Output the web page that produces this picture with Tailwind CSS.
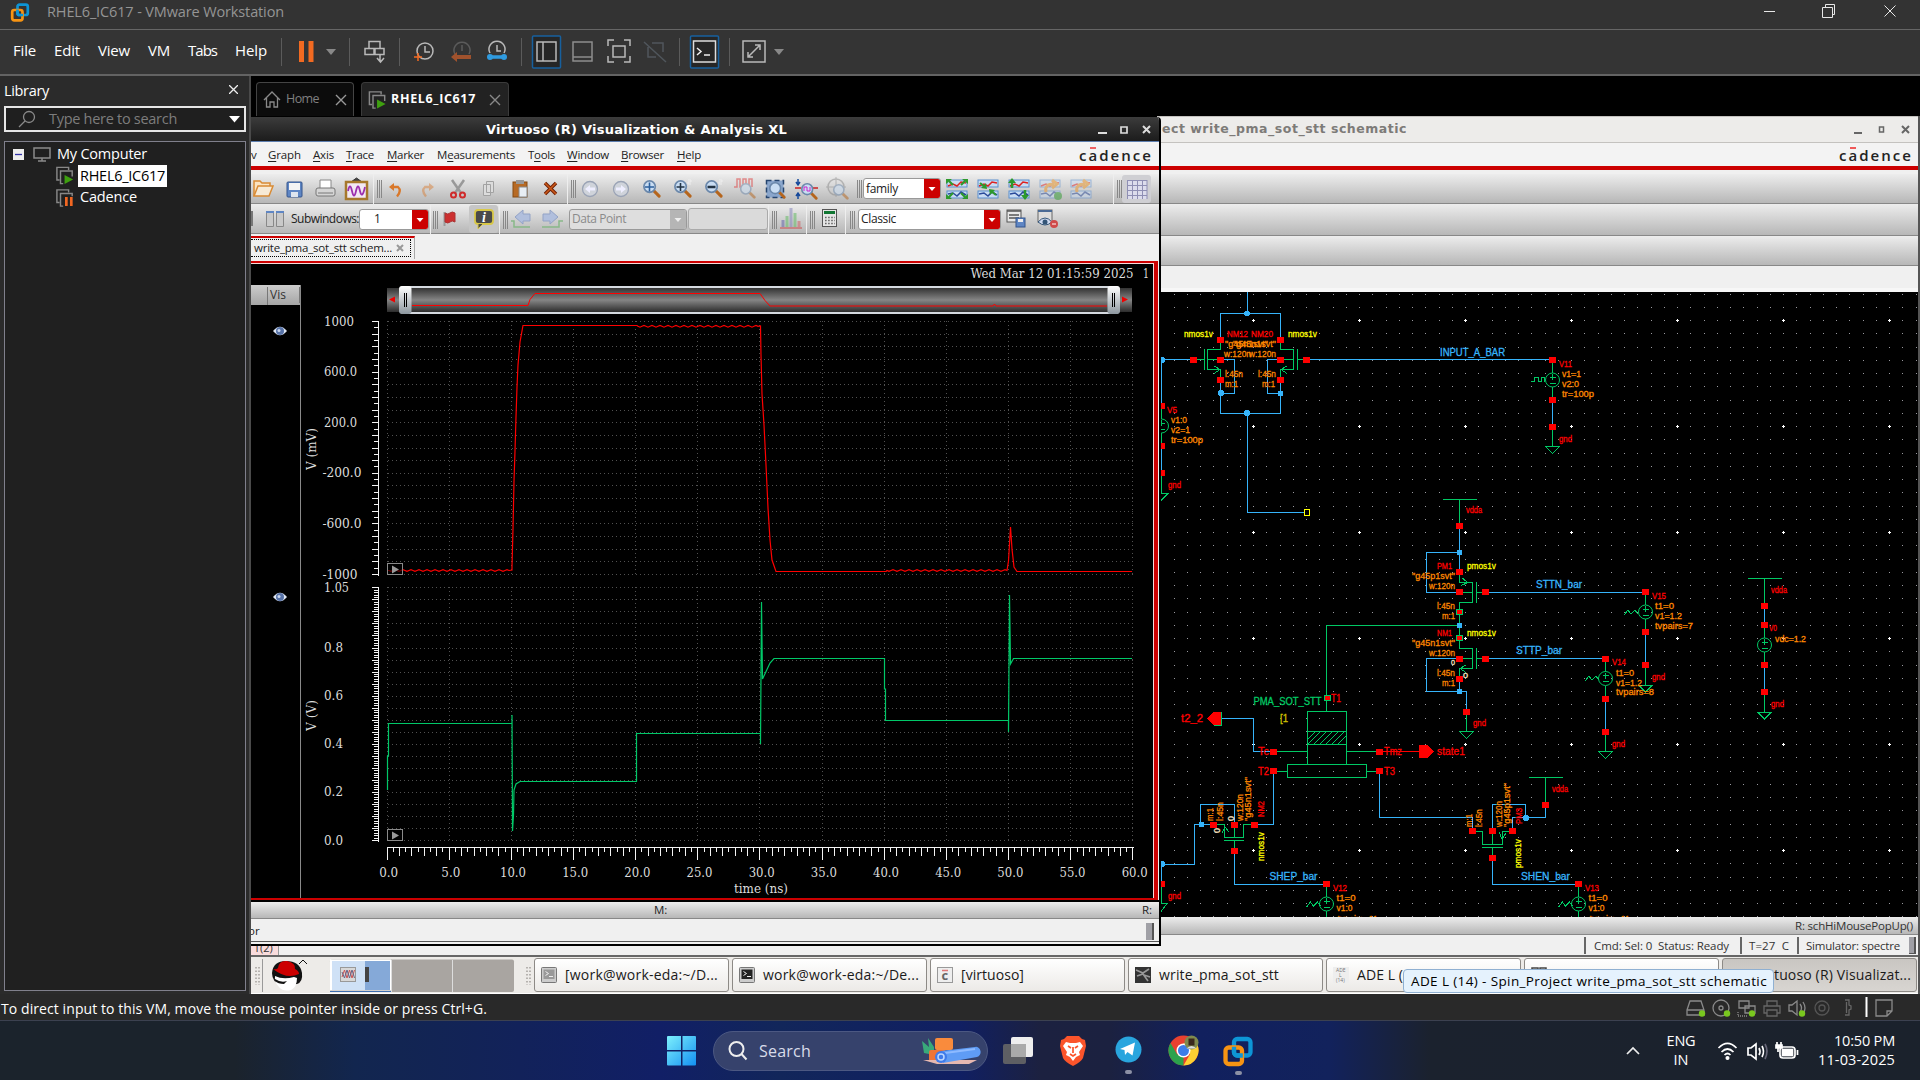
<!DOCTYPE html>
<html lang="en">
<head>
<meta charset="utf-8">
<title>RHEL6_IC617 - VMware Workstation</title>
<script src="https://cdn.jsdelivr.net/npm/@tailwindcss/browser@4"></script>
</head>
<body class="w-[1920px] h-[1080px] overflow-hidden bg-[#2b2b2b] font-['Open_Sans','Noto_Sans',sans-serif] text-[15px] text-white leading-none">
<svg class="hidden">
  <defs>
    <symbol id="vmw" viewBox="0 0 20 20"><rect x="7.5" y="2.2" width="10.3" height="10.3" rx="2" fill="none" stroke="#0d95d6" stroke-width="2.7"/><rect x="2.2" y="7.5" width="10.3" height="10.3" rx="2" fill="none" stroke="#f79413" stroke-width="2.7"/><path d="M7.5 7v3.5a2 2 0 0 0 2 2h3.5" fill="none" stroke="#0d95d6" stroke-width="2.7"/></symbol>
    <symbol id="vmon" viewBox="0 0 20 20"><path d="M4 15H1V1h13v3" fill="none" stroke="#888" stroke-width="1.6"/><path d="M8 19H5V5h13v6" fill="none" stroke="#888" stroke-width="1.6"/><path d="M9.500 9.500L19 14.500 9.500 19.500z" fill="#3fa010"/></symbol>
    <symbol id="vmpause" viewBox="0 0 20 20"><path d="M4 15H1V1h13v3" fill="none" stroke="#888" stroke-width="1.6"/><path d="M8 19H5V5h13v3" fill="none" stroke="#888" stroke-width="1.6"/><path d="M11.500 9v10M17 9v10" stroke="#f26722" stroke-width="3"/></symbol>
    <symbol id="lens" viewBox="0 0 20 20"><path d="M12 12l6 6" stroke="#b5651d" stroke-width="3.200" stroke-linecap="round"/><circle cx="8" cy="8" r="6" fill="#c9ddf3" stroke="#6b88ab" stroke-width="1.800"/></symbol>
    <symbol id="eye" viewBox="0 0 14 10"><path d="M0 5Q7-3.500 14 5 7 13.500 0 5z" fill="#dfe6f2"/><circle cx="7" cy="5" r="4" fill="#5873a8"/><circle cx="6" cy="4.500" r="1.500" fill="#c9d6ee"/></symbol>
    <symbol id="term" viewBox="0 0 16 16"><rect x=".5" y=".5" width="15" height="15" rx="1" fill="#ccc" stroke="#777"/><rect x="2.500" y="2.500" width="11" height="9.500" fill="currentColor"/><path d="M4.500 4.500l3 2-3 2M8 9.500h4" stroke="#eee" fill="none"/></symbol>
    <symbol id="wave" viewBox="0 0 22 20"><rect x="1" y="1" width="20" height="7" fill="#c9dcf2" stroke="#5b8fd0"/><rect x="1" y="12" width="20" height="7" fill="#c9dcf2" stroke="#5b8fd0"/><path d="M2 7l5-2 4 2 4-4 5 1" stroke="#d22" stroke-width="1.500" fill="none"/><path d="M2 15l5-1 4 3 4-4 5 3" stroke="#2a4a9a" stroke-width="1.500" fill="none"/></symbol>
  </defs>
</svg>

<div class="flex flex-col w-[1920px] h-[1080px]">
  <!-- host window title -->
  <header class="flex h-[30px] items-center bg-[#333] border-b border-[#666] text-[#959595]">
    <svg class="w-5 h-[21px] ml-2.5 mt-[-5px]"><use href="#vmw"/></svg>
    <span data-w="237" class="ml-[17px] mt-[-5px] text-[14.5px] whitespace-nowrap">RHEL6_IC617 - VMware Workstation</span>
    <div class="ml-auto flex items-center mr-6 mt-[-8px]">
      <svg width="11" height="12" class="mr-[47px]"><path d="M0 6.500h11" stroke="#e8e8e8"/></svg>
      <svg width="14" height="14" class="mr-[48px]"><path d="M.5 3.500h10v10h-10zM3.500 3V.5h9v10H11" fill="none" stroke="#e8e8e8"/></svg>
      <svg width="12" height="12"><path d="M.5.5l11 11M11.500.5l-11 11" stroke="#e8e8e8"/></svg>
    </div>
  </header>
  <!-- host menu -->
  <nav class="relative flex h-[46px] items-center bg-[#343434] border-b-2 border-[#636363] pl-[13px] pb-[2px] whitespace-nowrap">
    <div class="flex text-[15px] pb-[2px]">
      <span class="w-[41px]"><span data-w="23">File</span></span><span class="w-[44px]"><span data-w="26">Edit</span></span><span class="w-[50px]"><span data-w="32">View</span></span><span class="w-[40px]"><span data-w="22">VM</span></span><span class="w-[47px]"><span data-w="29">Tabs</span></span><span class="w-[45px]"><span data-w="32">Help</span></span>
    </div>
    <svg width="520" height="42" viewBox="280 30 520 42" fill="none" stroke="#b9b9b9" stroke-width="1.500">
      <path d="M281.500 38v28M349.500 38v28M399.500 38v28M521.500 38v28M679.500 38v28M729.500 38v28" stroke="#5b5b5b" stroke-width="1"/>
      <path d="M301.500 41v21M311 41v21" stroke="#f26a21" stroke-width="5"/><path d="M326 49h10l-5 6z" fill="#888" stroke="none"/>
      <path d="M369 41.500h11v7h-11zM365 48.500h9v6h-9zM375 48.500h9v6h-9zM380 54v7M377 58l3.500 4 3.500-4"/>
      <g><circle cx="425" cy="51" r="8"/><path d="M425 46v6h5"/><path d="M414 57h8M418 53v8" stroke="#f26a21"/></g>
      <g><path d="M455 54a8 8 0 1 1 14 0" stroke="#5b5b5b"/><path d="M462 45v6" stroke="#5b5b5b"/><path d="M471 57h-14" stroke="#a0522d" stroke-width="4"/><path d="M451 57l6-5v10z" fill="#a0522d" stroke="none"/></g>
      <g><path d="M490 53a8 8 0 1 1 14 0"/><path d="M497 45v6h4"/><path d="M489 57h15" stroke="#2f9be0" stroke-width="3.500"/><circle cx="490" cy="57" r="3" fill="#2f9be0" stroke="none"/><circle cx="504" cy="57" r="3" fill="#2f9be0" stroke="none"/></g>
      <rect x="532.500" y="36" width="28" height="32" rx="1" fill="#262626" stroke="#17609e"/><rect x="537" y="42" width="19" height="19"/><path d="M543 42v19"/>
      <rect x="573" y="42" width="19" height="19" stroke="#8d8d8d"/><path d="M573 57h19" stroke="#8d8d8d"/>
      <path d="M608 46v-6h6M624 40h6v6M630 56v6h-6M614 62h-6v-6"/><rect x="613" y="46" width="12" height="11"/>
      <path d="M644 42l22 20M648 47v10h8M652 43h11v9" stroke="#50565c"/>
      <rect x="690.500" y="36" width="28" height="32" rx="1" fill="#262626" stroke="#17609e"/><rect x="693.500" y="41" width="22" height="21" stroke="#ddd"/><path d="M697 48l4 3.500-4 3.500M704 55h6" stroke="#eee"/>
      <rect x="743" y="41" width="22" height="21"/><path d="M748 57l12-12M755 45h5v5M748 52v5h5"/><path d="M774 49h10l-5 6z" fill="#888" stroke="none"/>
    </svg>
  </nav>

  <div class="flex h-[918px]">
    <!-- library -->
    <aside class="w-[251px] bg-[#2b2b2b] border-r-2 border-[#4a4a4a] pl-1 pr-1">
      <div class="flex justify-between items-center h-[29px] pt-px"><span data-w="45" class="text-[14.500px]">Library</span><svg width="9" height="9" class="mr-[7px] mb-1"><path d="M0 0l9 9M9 0L0 9" stroke="#eee" stroke-width="1.300"/></svg></div>
      <div class="flex items-center h-[26px] border-2 border-[#e6e6e6] bg-[#1f1f1f] w-[242px] pl-3 pr-1 mt-px text-[#7d7d7d]">
        <svg width="18" height="18" fill="none" stroke="#8a8a8a" stroke-width="1.300"><circle cx="11" cy="7" r="5.500"/><path d="M7 11l-6 6"/></svg>
        <span data-w="128" class="ml-[13px] text-[14.500px] whitespace-nowrap">Type here to search</span>
        <svg width="11" height="7" class="ml-auto"><path d="M0 0h11L5.500 6.500z" fill="#fff"/></svg>
      </div>
      <div class="mt-[9px] h-[850px] w-[242px] border border-[#80808c] bg-[#202020] pl-2 pt-px text-[14.500px] whitespace-nowrap">
        <div class="flex items-center h-[22px]"><svg width="11" height="11"><path d="M0 0h11v11H0z" fill="#eee"/><path d="M2 5.500h7" stroke="#33a" stroke-width="1.300"/></svg><svg width="18" height="15" class="ml-[9px]" fill="none" stroke="#8a8a8a" stroke-width="1.500"><path d="M1 1h16v10H1zM9 11v3M5 14h8"/></svg><span data-w="90" class="ml-1.5">My Computer</span></div>
        <div class="flex items-center h-[21px] pl-[43px]"><svg width="18" height="19"><use href="#vmon"/></svg><span class="ml-[4px] bg-white text-black h-[22px] w-[89px] pl-[2px] leading-[22px]"><span data-w="85">RHEL6_IC617</span></span></div>
        <div class="flex items-center h-[23px] pl-[43px]"><svg width="18" height="18"><use href="#vmpause"/></svg><span data-w="57" class="ml-1.5">Cadence</span></div>
      </div>
    </aside>

    <main class="relative w-[1669px] bg-black overflow-hidden flex flex-col">
      <div class="flex h-10 pt-[6px] pl-[5px] gap-[7px] text-[12.500px] text-[#808080]">
        <div class="flex items-center w-[98px] border border-b-0 border-[#444] rounded-t bg-[#0c0c0c] pl-[6px]"><svg width="18" height="17" fill="none" stroke="#8a8a8a" stroke-width="1.300"><path d="M1 9l8-8 8 8M3.500 7v9H7v-5h4v5h3.500V7"/></svg><span data-w="33" class="ml-[5px]">Home</span><svg width="12" height="12" class="ml-[16px]"><path d="M1 1l10 10M11 1L1 11" stroke="#999" stroke-width="1.400"/></svg></div>
        <div class="flex items-center w-[148px] border border-b-0 border-[#3b3b3b] rounded-t bg-[#222] pl-[6px]"><svg width="19" height="18"><use href="#vmon"/></svg><span data-w="85" class="ml-1 font-bold text-white whitespace-nowrap">RHEL6_IC617</span><svg width="12" height="12" class="ml-[13px]"><path d="M1 1l10 10M11 1L1 11" stroke="#888" stroke-width="1.400"/></svg></div>
      </div>

      <!-- schematic editor window -->
      <section class="absolute left-[906px] top-10 w-[761px] h-[841px] bg-[#f0f0f0] text-[#333] overflow-hidden">
        <div class="flex items-center h-[27px] bg-[#edecea] border-t border-b border-[#c4c2bf] pl-[5px] text-[#7d7b78]">
          <span data-w="245" class="text-[12.500px] font-bold whitespace-nowrap font-['DejaVu_Sans',sans-serif]">ect write_pma_sot_stt schematic</span>
          <svg width="60" height="12" class="ml-auto mr-[6px] text-[#666]" stroke="currentColor" fill="none" stroke-width="2"><path d="M2 9h8"/><path d="M27.500 3h4v5h-4z" stroke-width="1.500"/><path d="M50 2l7 7M57 2l-7 7"/></svg>
        </div>
        <div class="flex h-[23px] items-center justify-end pr-[6px] bg-[#f3f3f3] border-b border-[#f3f3f3]"><svg width="73" height="20"><text x="0" y="17" textLength="72" lengthAdjust="spacing" font-family="Open Sans" font-weight="600" font-size="15" fill="#222">cadence</text><path d="M11 4h6" stroke="#e33" stroke-width="1.600"/></svg></div>
        <div class="h-1 bg-[#c00]"></div>
        <div class="mt-[4px] h-[30px] bg-linear-to-b from-[#ededed] to-[#b7b7b7] border-b border-[#888]"></div>
        <div class="h-8 bg-linear-to-b from-[#ededed] to-[#b7b7b7] border-b border-[#888]"></div>
        <div class="h-[30px] bg-linear-to-b from-[#ededed] to-[#b7b7b7] border-b border-[#888]"></div>
        <div class="h-[26px] border-b-4 border-[#f7f7f7]"></div>
        <svg id="sch" class="ml-[4px] block" width="757" height="625" viewBox="1161 292 757 625" fill="none" shape-rendering="crispEdges"></svg>
        <div class="flex items-center justify-end h-[18px] pr-[5px] bg-linear-to-b from-[#ededed] to-[#b7b7b7] border-b border-[#888] text-[11.500px]"><span data-w="118" class="whitespace-nowrap">R: schHiMousePopUp()</span></div>
        <div class="flex items-center justify-end h-[22px] text-[11.500px] border-b-2 border-[#666] whitespace-pre pr-[2px]">
          <span class="border-l-2 border-[#666] h-[17px] pl-2 pr-[11px] leading-[17px]"><span data-w="135">Cmd: Sel: 0  Status: Ready</span></span><span class="border-l-2 border-[#666] h-[17px] pl-[7px] pr-[8px] leading-[17px]"><span data-w="40">T=27  C</span></span><span class="border-l-2 border-[#666] h-[17px] pl-[7px] leading-[17px]"><span data-w="94">Simulator: spectre</span></span><span class="ml-[9px] w-[7px] h-[17px] bg-[#a0a0a6] border-r-2 border-b border-[#555]"></span>
        </div>
      </section>

      <!-- waveform window -->
      <section class="absolute left-0 top-[41px] w-[910px] h-[829px] bg-[#f0f0f0] border-r-2 border-b-2 border-black text-[#222] overflow-hidden rounded-tr">
        <div class="flex items-center h-[25px] bg-linear-to-b from-[#3c3c3c] to-[#1c1c1c] border-b border-[#5e7fb0] pl-[235px]">
          <span data-w="301" class="text-[13px] font-bold text-white whitespace-nowrap font-['DejaVu_Sans',sans-serif]">Virtuoso (R) Visualization &amp; Analysis XL</span>
          <svg width="56" height="12" class="ml-auto mr-[6px] mt-[2px]" stroke="#ddd" fill="none" stroke-width="2"><path d="M1 9h9"/><path d="M24 3h6v6h-6z" stroke-width="1.700"/><path d="M46 2l7 7M53 2l-7 7"/></svg>
        </div>
        <div class="relative flex items-center h-[24px] pt-[2px] bg-[#f3f3f3] text-[11.500px] whitespace-nowrap">
          <span class="w-[17px]"><span data-w="5">v</span></span>
          <span class="w-[45px]"><span data-w="33"><u class="underline-offset-2">G</u>raph</span></span><span class="w-[33px]"><span data-w="21"><u class="underline-offset-2">A</u>xis</span></span><span class="w-[41px]"><span data-w="28"><u class="underline-offset-2">T</u>race</span></span><span class="w-[50px]"><span data-w="37"><u class="underline-offset-2">M</u>arker</span></span><span class="w-[91px]"><span data-w="78">M<u class="underline-offset-2">e</u>asurements</span></span><span class="w-[39px]"><span data-w="27">T<u class="underline-offset-2">o</u>ols</span></span><span class="w-[54px]"><span data-w="42"><u class="underline-offset-2">W</u>indow</span></span><span class="w-[56px]"><span data-w="43"><u class="underline-offset-2">B</u>rowser</span></span><span data-w="24"><u class="underline-offset-2">H</u>elp</span>
          <svg width="73" height="20" class="ml-auto mr-[7px]"><text x="0" y="16" textLength="72" lengthAdjust="spacing" font-family="Open Sans" font-weight="600" font-size="15" fill="#222">cadence</text><path d="M11 3h6" stroke="#e33" stroke-width="1.600"/></svg>
        </div>
        <div class="h-1 bg-[#c00]"></div>
        <!-- toolbar row 1 -->
        <div class="mt-[4px] flex h-[30px] items-center bg-linear-to-b from-[#ededed] to-[#b7b7b7] border-b border-[#888] *:shrink-0">
          <svg width="28" height="26" viewBox="0 0 28 26"><path d="M3 20V5h6l2 2h8v4" fill="#fbe3c0" stroke="#d98b35" stroke-width="1.500"/><path d="M3 20l4-10h15l-4 10z" fill="#f7ead6" stroke="#d98b35" stroke-width="1.500"/></svg>
          <svg width="31" height="26" viewBox="0 0 31 26"><rect x="8" y="6" width="15" height="15" rx="1" fill="#5f86c4" stroke="#34548c"/><rect x="10" y="7" width="11" height="7" fill="#f4f4f4"/><rect x="12" y="16" width="7" height="5" fill="#dfe5ee"/></svg>
          <svg width="31" height="26" viewBox="0 0 31 26"><path d="M10 12V4h11v8" fill="#fff" stroke="#888"/><rect x="6" y="12" width="19" height="8" rx="2" fill="#d5d5d5" stroke="#777"/><path d="M8 17h15" stroke="#777"/></svg>
          <svg width="31" height="26" viewBox="0 0 31 26"><path d="M10 6l5.500-4L21 6" fill="#444" stroke="#333"/><rect x="5" y="6" width="21" height="17" fill="#f2e8f4" stroke="#a6782c" stroke-width="2.500"/><path d="M7 15q2-9 4 0t4 0 4 0 5-4" stroke="#9b2fae" stroke-width="1.800" fill="none"/></svg>
          <svg width="10" height="30"><path d="M1.500 0v30" stroke="#eee"/><path d="M5.500 6v18M7.500 6v18M9.500 6v18" stroke="#888"/></svg>
          <svg width="30" height="26" viewBox="0 0 30 26"><path d="M15 20.500q5-6 1-9.500h-5" stroke="#d9782a" stroke-width="2.300" fill="none"/><path d="M12 7l-5 4 5 4z" fill="#d9782a"/></svg>
          <svg width="31" height="26" viewBox="0 0 31 26" opacity=".45"><path d="M14 20.500q-5-6-1-9.500h5" stroke="#d9782a" stroke-width="2.300" fill="none"/><path d="M17 7l5 4-5 4z" fill="#d9782a"/></svg>
          <svg width="31" height="26" viewBox="0 0 31 26"><path d="M9 4l9 13M21 4l-9 13" stroke="#999" stroke-width="2.500"/><circle cx="10.500" cy="19" r="2.500" fill="none" stroke="#cf2a2a" stroke-width="2"/><circle cx="19.500" cy="19" r="2.500" fill="none" stroke="#cf2a2a" stroke-width="2"/></svg>
          <svg width="31" height="26" viewBox="0 0 31 26" fill="#dcdcdc" stroke="#a2a2a2"><path d="M12.500 5.500h7v11h-7zM9.500 8.500h7v11h-7z"/></svg>
          <svg width="31" height="26" viewBox="0 0 31 26"><rect x="8" y="6" width="14" height="15" fill="#b76a24" stroke="#854a12"/><rect x="11" y="4" width="8" height="4" fill="#999"/><path d="M14 11h8l0 10h-8z" fill="#e8eef4" stroke="#888"/></svg>
          <svg width="31" height="26" viewBox="0 0 31 26"><path d="M9 7l11 11M20 7L9 18" stroke="#702006" stroke-width="3.500"/><path d="M9 7l11 11M20 7L9 18" stroke="#cc5a1a" stroke-width="1.500"/></svg>
          <svg width="9" height="30"><path d="M.5 0v30" stroke="#eee"/><path d="M4.500 6v18M6.500 6v18M8.500 6v18" stroke="#888"/></svg>
          <svg width="30" height="26" viewBox="0 0 30 26"><circle cx="14" cy="13" r="7.500" fill="#cfd3da" stroke="#9aa3b5" stroke-width="1.300"/><path d="M9 13l5-4v2.500h5v3h-5V17z" fill="#eef"/></svg>
          <svg width="31" height="26" viewBox="0 0 31 26"><circle cx="15" cy="13" r="7.500" fill="#cfd3da" stroke="#9aa3b5" stroke-width="1.300"/><path d="M20 13l-5-4v2.500h-5v3h5V17z" fill="#eef"/></svg>
          <svg width="31" height="26" viewBox="0 0 31 26"><use href="#lens" x="5" y="3" width="19" height="19"/><path d="M12.500 6.500v9M8 11h9" stroke="#2b5f9c" stroke-width="1.600"/></svg>
          <svg width="31" height="26" viewBox="0 0 31 26"><use href="#lens" x="5" y="3" width="19" height="19"/><path d="M12.500 7v8M8.500 11h8" stroke="#234" stroke-width="1.600"/><path d="M20 4h3v2h-3v2h3" stroke="#eee" fill="none"/></svg>
          <svg width="31" height="26" viewBox="0 0 31 26"><use href="#lens" x="5" y="3" width="19" height="19"/><path d="M8.500 11h8" stroke="#234" stroke-width="2.400"/><path d="M20 4h3v2h-3v2h3" stroke="#eee" fill="none"/></svg>
          <svg width="31" height="26" viewBox="0 0 31 26" opacity=".5"><path d="M4 11h3V3h3v8h3V3h3v8h3V3h3v8" stroke="#d33" fill="none" stroke-width="1.500"/><use href="#lens" x="9" y="6" width="17" height="17"/></svg>
          <svg width="31" height="26" viewBox="0 0 31 26"><rect x="5.500" y="4.500" width="17" height="17" fill="#8aa6cc" stroke="#26456f" stroke-dasharray="5 3" stroke-width="1.500"/><use href="#lens" x="7" y="5" width="18" height="18"/></svg>
          <svg width="31" height="26" viewBox="0 0 31 26"><path d="M6 3v5M4 6l2 3 2-3M6 23v-5M4 20l2-3 2 3" stroke="#15489a" stroke-width="1.500" fill="none"/><path d="M3 12h6M19 12h7" stroke="#c22" stroke-width="1.500"/><use href="#lens" x="8" y="6" width="18" height="18"/><path d="M12 15v-4h3v4h3v-4" stroke="#c2c" fill="none"/></svg>
          <svg width="31" height="26" viewBox="0 0 31 26" opacity=".5"><circle cx="13" cy="11" r="8" fill="none" stroke="#888" stroke-width="1.500"/><path d="M13 1v20M3 11h20" stroke="#888"/><use href="#lens" x="9" y="7" width="17" height="17"/></svg>
          <svg width="9" height="30"><path d="M-.5 0v30" stroke="#eee"/><path d="M3.500 6v18M5.500 6v18M7.500 6v18" stroke="#888"/></svg>
          <div class="flex items-center w-[78px] h-[21px] bg-white border border-[#999] rounded-[3px] overflow-hidden text-[12px]"><span data-w="32" class="ml-[2px]">family</span><svg width="16" height="21" class="ml-auto bg-[#c00]"><path d="M4.500 9h7L8 13z" fill="#fff"/></svg></div>
          <svg width="31" height="26" viewBox="0 0 31 26"><use href="#wave" x="5" y="3" width="22" height="20"/><path d="M8 5l4 4M24 5l-4 4M8 21l4-4M24 21l-4-4" stroke="#2d9a2d" stroke-width="2.200"/><path d="M5 3h6l-6 5zM27 3h-6l6 5zM5 23h6l-6-5zM27 23h-6l6-5z" fill="#2d9a2d"/></svg>
          <svg width="31" height="26" viewBox="0 0 31 26"><use href="#wave" x="5" y="3" width="22" height="20"/><path d="M8 7l5 4M24 19l-5-4" stroke="#2d9a2d" stroke-width="2.200"/><path d="M15 13l-6-1 5-5zM17 13l6 1-5 5z" fill="#2d9a2d"/></svg>
          <svg width="31" height="26" viewBox="0 0 31 26"><use href="#wave" x="5" y="3" width="22" height="20"/><path d="M9 12V6M22 14v7" stroke="#2d9a2d" stroke-width="2.500"/><path d="M5 7l4-5 4 5zM18 19l4 5 4-5z" fill="#2d9a2d"/></svg>
          <svg width="31" height="26" viewBox="0 0 31 26" opacity=".5"><use href="#wave" x="5" y="3" width="22" height="20"/><path d="M12 16q-2-8 8-8M18 4l5 4-5 4" stroke="#e89020" stroke-width="3" fill="none"/><circle cx="24" cy="20" r="4" fill="#2d9a2d"/></svg>
          <svg width="31" height="26" viewBox="0 0 31 26" opacity=".5"><use href="#wave" x="5" y="3" width="22" height="20"/><path d="M12 16q-2-8 8-8M18 4l5 4-5 4" stroke="#e89020" stroke-width="3" fill="none"/></svg>
          <svg width="26" height="30"><path d="M17.500 0v30" stroke="#eee"/><path d="M21.500 6v18M23.500 6v18M25.500 6v18" stroke="#888"/></svg>
          <svg width="29" height="28"><rect width="29" height="28" rx="3" fill="#cfcfd3"/><rect x="5" y="5" width="20" height="19" fill="#dcdcec"/><path d="M5.500 5v19M10.500 5v19M15.500 5v19M20.500 5v19M25 5v19M5 5.500h20M5 10.500h20M5 15.500h20M5 20.500h20" stroke="#8f8fb4"/></svg>
        </div>
        <!-- toolbar row 2 -->
        <div class="flex h-[30px] items-center pt-px bg-linear-to-b from-[#ededed] to-[#b7b7b7] border-b border-[#888] *:shrink-0 text-[12px] whitespace-nowrap">
          <svg width="34" height="26"><rect x="0" y="5" width="2" height="15" fill="#777"/><path d="M15.500 5.500h7v15h-7zM25.500 5.500h7v15h-7z" fill="#c9c9c9" stroke="#888"/><path d="M15 6h8M25 6h8" stroke="#5f86c4" stroke-width="2"/></svg>
          <span data-w="68" class="ml-[6px]">Subwindows:</span>
          <div class="flex items-center w-[70px] h-[21px] bg-white border border-[#999] rounded-[3px] overflow-hidden"><span class="ml-[14px]">1</span><svg width="16" height="21" class="ml-auto bg-[#c00]"><path d="M4.500 9h7L8 13z" fill="#fff"/></svg></div>
          <svg width="10" height="29"><path d="M1.500 0v30" stroke="#eee"/><path d="M4.500 6v18M6.500 6v18M8.500 6v18" stroke="#888"/></svg>
          <svg width="25" height="26"><path d="M5.500 6v14" stroke="#999" stroke-width="2"/><path d="M6 7q3 2 5 0t5 0v9q-3-2-5 0t-5 0z" fill="#cc2f2f" stroke="#a33"/></svg>
          <svg width="29" height="28" class="ml-[5px]"><rect width="29" height="28" rx="3" fill="#c6c6c6"/><rect x="6" y="5" width="18" height="14" rx="3" fill="#4a4a4a" stroke="#d8c848" stroke-width="1.800"/><path d="M9 19v5l5-5" fill="#4a4a4a" stroke="#d8c848"/><text x="13" y="17" font-family="Liberation Serif" font-style="italic" font-weight="bold" font-size="14" fill="#fff">i</text></svg>
          <svg width="12" height="29"><path d="M1.500 0v30" stroke="#eee"/><path d="M5.500 6v18M7.500 6v18M9.500 6v18" stroke="#888"/></svg>
          <svg width="26" height="26"><path d="M5 11l8-7v4h7v7h-7v3z" fill="#b1bfdd" stroke="#93a3c6"/><path d="M1 15h3v6h16" stroke="#88b888" stroke-width="1.500" fill="none"/></svg>
          <svg width="31" height="26"><path d="M22 11l-8-7v4H7v7h7v3z" fill="#b1bfdd" stroke="#93a3c6"/><path d="M27 15h-4v6H6" stroke="#88b888" stroke-width="1.500" fill="none"/></svg>
          <div class="flex items-center w-[118px] h-[21px] ml-[2px] border border-[#999] bg-[#dedede] rounded-[3px] overflow-hidden text-[#8b8b8b]"><span data-w="54" class="ml-[2px]">Data Point</span><svg width="16" height="21" class="ml-auto bg-[#b5b5b5]"><path d="M4.500 9h7L8 13z" fill="#eee"/></svg></div>
          <div class="w-[80px] h-[22px] ml-px border border-[#aaa] bg-[#dadada] rounded-[3px]"></div>
          <svg width="9" height="29"><path d="M.5 0v30" stroke="#eee"/><path d="M4.500 6v18M6.500 6v18M8.500 6v18" stroke="#888"/></svg>
          <svg width="28" height="26" opacity=".55"><path d="M6 21v-7" stroke="#66a" stroke-width="3"/><path d="M10 21v-11M18 21V7" stroke="#6b6" stroke-width="3"/><path d="M14 21V2" stroke="#88b" stroke-width="3"/><path d="M22 21v-6" stroke="#c66" stroke-width="3"/><path d="M3 22h22" stroke="#c55" stroke-width="2"/></svg>
          <svg width="11" height="29"><path d="M1.500 0v30" stroke="#eee"/><path d="M5.500 6v18M7.500 6v18M9.500 6v18" stroke="#888"/></svg>
          <svg width="27" height="26"><rect x="6.500" y="3.500" width="14" height="17" fill="#e6e6e6" stroke="#555"/><rect x="8" y="5" width="11" height="3" fill="#173"/><path d="M9 11.500h10M9 14.500h10M9 17.500h10" stroke="#666" stroke-width="1.600" stroke-dasharray="1.600 1.500"/></svg>
          <svg width="15" height="29"><path d="M2.500 0v30" stroke="#eee"/><path d="M7.500 6v18M9.500 6v18M11.500 6v18" stroke="#888"/></svg>
          <div class="flex items-center w-[143px] h-[21px] bg-white border border-[#999] rounded-[3px] overflow-hidden"><span data-w="35" class="ml-[2px]">Classic</span><svg width="16" height="21" class="ml-auto bg-[#c00]"><path d="M4.500 9h7L8 13z" fill="#fff"/></svg></div>
          <svg width="31" height="26"><rect x="6" y="4" width="14" height="12" fill="#e8e8e8" stroke="#555"/><path d="M6 5h14M8 9h10M8 12h10" stroke="#555" stroke-width="1.500"/><rect x="15" y="12" width="9" height="9" fill="#5f86c4" stroke="#34548c"/><rect x="17" y="13" width="5" height="3" fill="#eee"/></svg>
          <svg width="31" height="26"><rect x="6" y="4" width="14" height="12" fill="#ddd" stroke="#666"/><path d="M6 5h14" stroke="#4a6a95" stroke-width="2"/><path d="M6 16q7-8 14 0-7 6-14 0z" fill="#cfdaf0" stroke="#357"/><circle cx="13" cy="16" r="2.500" fill="#357"/><circle cx="22" cy="18" r="4" fill="#cf4a4a"/><path d="M20 18h4" stroke="#fff"/></svg>
        </div>
        <!-- document tab -->
        <div class="flex h-[25px] mt-[2px]">
          <div class="w-[164px] border-t-2 border-[#c00] border-r border-r-[#aaa] h-[23px]"><div class="flex items-center h-[18px] w-[160px] border border-l-0 border-dotted border-black text-[11.500px] pl-[3px] mt-px"><span data-w="138" class="whitespace-nowrap">write_pma_sot_stt schem...</span><svg width="8" height="8" class="ml-[4px]"><path d="M1 1l6 6M7 1L1 7" stroke="#999" stroke-width="2"/></svg></div></div>
        </div>
        <!-- plot -->
        <div class="bg-black border-t-2 border-r-4 border-b-2 border-[#c00] w-[907px] h-[639px]">
          <svg id="plot" class="block border-t border-r border-[#f6dada]" width="903" height="635" viewBox="251 264 902 634" fill="none"></svg>
        </div>
        <div class="flex items-center h-[19px] bg-linear-to-b from-[#ededed] to-[#b7b7b7] border-t-2 border-t-black border-b border-b-[#888] text-[11.500px]"><span class="pl-[403px]">M:</span><span class="ml-auto mr-[7px]">R:</span></div>
        <div class="flex items-center h-[23px] pt-[2px] text-[11.500px] border-b border-[#555] overflow-hidden"><span class="-ml-[3px]">or</span><span class="ml-auto mr-[5px] w-2 h-[17px] bg-[#a0a0a6] border-r-2 border-[#555]"></span></div>
      </section>

      <!-- strip under the windows and the GNOME panel -->
      <div class="absolute left-0 top-[870px] w-[910px] h-[11px] bg-[#f0f0f0] border-b-2 border-[#666] overflow-hidden"><div class="w-7 h-[10px] bg-[#f9dcdc] border-r border-[#999] text-[#333] text-[11px] leading-[4px] pl-[3px]">T(2)</div></div>
      <footer class="absolute left-0 top-[881px] w-[1667px] h-[37px] bg-[#edebe8] flex items-center text-[#1a1a1a] text-[14px] whitespace-nowrap border-b border-[#fff]">
        <svg width="283" height="36" viewBox="251 957 283 36">
          <path d="M256 967v18M259 967v18M527 967v18M530 967v18" stroke="#b5b2ae" stroke-width="2" stroke-dasharray="1.500 2"/><path d="M262.500 959v33" stroke="#999"/>
          <path d="M272 973q1-12 14-12 14 0 16 12 1 9-5 11l-16 1q-9-3-9-12z" fill="#111"/><path d="M275 976q8 4 19 1l3 1q0 9-6 12-8 2-12-3-5-5-4-11z" fill="#fff"/><path d="M275 979q6 4 12 2l-3 3q-6 0-9-3z" fill="#111"/><path d="M273 969q3 1 5-1 1-8 9-7 9 2 8 8 4 2 4 5-12 6-26-5z" fill="#c00"/><path d="M299 964l4-4 4 4" stroke="#111" fill="none"/>
          <rect x="330" y="959.500" width="184" height="32.500" rx="2" fill="#a9a5a1"/><rect x="330" y="959.500" width="61" height="31" fill="#fff"/><rect x="332" y="961" width="33" height="29" fill="#cfe1f6"/><rect x="365" y="961" width="25" height="29" fill="#85a9d8"/><path d="M330 991.500h61" stroke="#3d6dae"/><path d="M391.500 960v32M452.500 960v32" stroke="#ddd"/><rect x="340.500" y="967.500" width="15" height="14" fill="#d8d8d8" stroke="#999"/><path d="M342 977l2.500-7 2.500 8 2.500-8 2.500 8 2.500-8" stroke="#c55" fill="none"/><path d="M342 972l2.500 6 2.500-8 2.500 8 2.500-8 2.500 8" stroke="#668" fill="none"/><rect x="365" y="967" width="4" height="15" fill="#444"/>
        </svg>
        <div class="flex gap-[3px] items-center">
          <div class="flex items-center w-[195px] h-[34px] border border-[#8d8a86] rounded-[3px] bg-linear-to-b from-white to-[#eceae7] pl-[6px]"><svg class="w-4 h-4 text-[#999]"><use href="#term"/></svg><span data-w="153" class="ml-2">[work@work-eda:~/D...</span></div>
          <div class="flex items-center w-[195px] h-[34px] border border-[#8d8a86] rounded-[3px] bg-linear-to-b from-white to-[#eceae7] pl-[6px]"><svg class="w-4 h-4 text-[#222]"><use href="#term"/></svg><span data-w="156" class="ml-2">work@work-eda:~/De...</span></div>
          <div class="flex items-center w-[195px] h-[34px] border border-[#8d8a86] rounded-[3px] bg-linear-to-b from-white to-[#eceae7] pl-[6px]"><svg width="16" height="16"><rect x=".5" y=".5" width="15" height="15" fill="#eee" stroke="#999"/><text x="4.500" y="13" font-family="Open Sans" font-weight="bold" font-size="13" fill="#666">c</text><path d="M5 3.500h6" stroke="#d77" stroke-width="1.500"/></svg><span data-w="63" class="ml-2">[virtuoso]</span></div>
          <div class="flex items-center w-[195px] h-[34px] border border-[#8d8a86] rounded-[3px] bg-linear-to-b from-white to-[#eceae7] pl-[6px]"><svg width="16" height="16"><rect width="16" height="16" fill="#333"/><path d="M1 3l7 3 6-4M2 9l6-2 5 7M9 8l6 2" stroke="#999" stroke-width="1.600" fill="none"/></svg><span data-w="120" class="ml-2">write_pma_sot_stt</span></div>
          <div class="flex items-center w-[195px] h-[34px] border border-[#8d8a86] rounded-[3px] bg-linear-to-b from-white to-[#eceae7] pl-[6px]"><svg width="16" height="16"><rect width="16" height="16" fill="#eee"/><g font-family="Open Sans" font-size="5" fill="#777"><text x="3" y="5">ADE</text><text x="6" y="10">L</text><text x="3" y="15">(14)</text></g></svg><span data-w="46" class="ml-2">ADE L (</span></div>
          <div class="flex items-start w-[195px] h-[34px] border border-[#8d8a86] rounded-[3px] bg-linear-to-b from-white to-[#eceae7] pl-[6px] pt-[8px]"><svg width="16" height="16"><path d="M1 1h6v6H1zM9 1h6v6H9z" fill="#fff" stroke="#444" stroke-width="1.500"/></svg></div>
          <div class="flex items-center justify-end w-[195px] h-[34px] border border-[#8d8a86] rounded-[3px] bg-linear-to-b from-[#c9c6c2] to-[#d8d5d1] pr-[5px]"><span data-w="137">tuoso (R) Visualizat...</span></div>
        </div>
      </footer>
      <div class="absolute left-[1152px] top-[893px] w-[371px] h-[24px] rounded-[4px] border border-[#8fb0d2] bg-[#e5f2fd] text-black text-[13.500px] pl-[7px] leading-[22px] whitespace-nowrap"><span data-w="356">ADE L (14) - Spin_Project write_pma_sot_stt schematic</span></div>
      <div class="absolute right-0 top-10 w-[2px] h-[878px] bg-[#555]"></div>
    </main>
  </div>

  <!-- host status line -->
  <div class="flex items-center h-[27px] bg-[#292929] border-b border-[#3c4150] pl-px text-[14px] whitespace-nowrap">
    <span data-w="486" class="mt-[3px]">To direct input to this VM, move the mouse pointer inside or press Ctrl+G.</span>
    <svg width="216" height="26" viewBox="1685 995 216 26" class="ml-auto mr-[19px]" fill="none" stroke="#8a8a8a" stroke-width="1.300">
      <g transform="translate(0 1)">
      <path d="M1687 1010l3-9h11l3 9v5h-17zM1687 1010h17"/><circle cx="1721" cy="1008" r="8"/><circle cx="1721" cy="1008" r="2"/><path d="M1739 1001h10v7h-10zM1745 1006h10v7h-10z"/><path d="M1738 1012v4h9" stroke-dasharray="1 1"/>
      <path d="M1767 1006v-5h10v5M1767 1013h-3v-7h16v7h-3M1767 1010h10v6h-10z" stroke="#666"/><path d="M1789 1005h3l5-4v14l-5-4h-3zM1800 1004q3 4 0 8M1803 1002q4 6 0 12"/><circle cx="1822" cy="1008" r="7" stroke="#555"/><circle cx="1822" cy="1008" r="3" stroke="#555"/><path d="M1845 1000h4v5l2 1v3l-2 1v5h-4M1846.500 1002v11" stroke="#666"/><path d="M1866.500 997v20" stroke="#fff" stroke-width="2"/><path d="M1876 1000h16v11l-5 5h-11zM1892 1011h-5v5"/>
      <g fill="#7ac71f" stroke="none"><circle cx="1702" cy="1013.500" r="3.200"/><circle cx="1727" cy="1013.500" r="3.200"/><circle cx="1752" cy="1013.500" r="3.200"/><circle cx="1802" cy="1013.500" r="3.200"/></g>
      </g>
    </svg>
  </div>

  <!-- Windows taskbar -->
  <div class="flex items-center h-[59px] bg-[linear-gradient(90deg,#1b232c_0,#1b232c_235px,#12264f_355px,#12225a_520px,#111f66_660px,#12265a_780px,#101f63_960px,#1c2140_1040px,#1b2140_1110px,#11205e_1200px,#12225c_1330px,#1b222e_1430px,#1b222c_1920px)]">
    <svg width="30" height="30" class="ml-[667px]"><defs><linearGradient id="win" x1="0" y1="0" x2="1" y2="1"><stop offset="0" stop-color="#7df0fc"/><stop offset="1" stop-color="#1390f2"/></linearGradient></defs><path d="M0 1a1 1 0 0 1 1-1h13v14H0zM15.500 0H28a1 1 0 0 1 1 1v13H15.500zM0 15.500h14v14H1a1 1 0 0 1-1-1zM15.500 15.500H29v13a1 1 0 0 1-1 1H15.500z" fill="url(#win)"/></svg>
    <div class="flex items-center w-[275px] h-10 ml-4 rounded-full bg-[#36426c] border border-[#4c5882] pl-[14px] pr-[6px]">
      <svg width="20" height="20" fill="none" stroke="#eee" stroke-width="2"><circle cx="8.500" cy="8" r="7"/><path d="M13.500 13l5 5.500"/></svg>
      <span data-w="52" class="ml-[11px] text-[16px] text-[#d8dcea]">Search</span>
      <svg width="60" height="28" class="ml-auto"><path d="M3 16L1 4l7 6-1-9 6 9v8z" fill="#39a97a"/><rect x="14" y="1" width="18" height="12" rx="2" fill="#f98b3c"/><rect x="8" y="13" width="17" height="12" rx="2" fill="#ef7535"/><path d="M2 23h54l-8 4H16z" fill="#e6b8b0"/><path d="M20 14l34-4a4.500 5 0 0 1 2 10l-34 6z" fill="#5f9cf5"/><path d="M24 16l30-4" stroke="#8dbaff" stroke-width="2"/><circle cx="20" cy="20" r="6" fill="#3f7bea"/><circle cx="20" cy="20" r="3" fill="none" stroke="#bcd7ff" stroke-width="1.500"/></svg>
    </div>
    <svg width="30" height="30" class="ml-[15px]"><rect x="8" y="1" width="22" height="20" rx="2" fill="#eee"/><rect x="0" y="8" width="23" height="20" rx="2" fill="#666" fill-opacity=".9"/><path d="M8 8h15v13H8z" fill="#aaa"/></svg>
    <svg width="28" height="30" class="ml-[26px]"><path d="M8 0h12l3 3 3 1 1 6-3 12q-2 4-10 8Q6 26 4 22L1 10 2 4l3-1z" fill="#fb542b"/><path d="M7 6l4 1h6l4-1 3 4-4 6 1 3-4 2-3 4-3-4-4-2 1-3-4-6z" fill="#fff"/><path d="M9 10l3 2M19 10l-3 2M14 11v6M11 18l3 2 3-2" stroke="#fb542b" stroke-width="1.700" fill="none"/></svg>
    <div class="flex flex-col items-center ml-7 pt-[9px]"><svg width="27" height="27"><circle cx="13.500" cy="13.500" r="13" fill="#29a5de"/><path d="M5 13l15-6.500-2.500 13-5-3.500-2.500 3-.5-5z" fill="#fff"/></svg><i class="w-[7px] h-1 rounded bg-[#8c90a5] mt-[7px]"></i></div>
    <svg width="31" height="31" viewBox="-15.500 -15.500 31 31" class="ml-[26px]"><circle r="15" fill="#e8412f"/><path d="M-13-7.500L-6.500 3.800 0 6.500 0 15A15 15 0 0 1-13-7.500z" fill="#2ba24c"/><path d="M0 15A15 15 0 0 0 13-7.500H0L6.500 3.800z" fill="#fdd032"/><circle r="7" fill="#fff"/><circle r="5.500" fill="#3c7de8"/><circle cx="8" cy="-8" r="7" fill="#7f8a4e"/><path d="M5-12h6v7H5z" fill="#3a281c"/><path d="M3-2q5-5 10 0z" fill="#ddd"/></svg>
    <div class="flex flex-col items-center ml-[23px] pt-[9px]"><svg width="32" height="33"><use href="#vmw"/></svg><i class="w-[7px] h-1 rounded bg-[#8c90a5] mt-[3px]"></i></div>
    <svg width="14" height="9" class="ml-auto" fill="none" stroke="#eee" stroke-width="1.700"><path d="M1 8l6-6 6 6"/></svg>
    <div class="flex flex-col items-center gap-[5px] ml-[26px] text-[14.500px] w-[30px]"><span data-w="29">ENG</span><span data-w="15">IN</span></div>
    <svg width="82" height="24" class="ml-[21px]" fill="none" stroke="#fff" stroke-width="1.700"><path d="M1.500 9q9-9 18 0M4.500 13q6-6 12 0M7.500 16q3-3 6 0"/><circle cx="10.500" cy="19" r="1.200" fill="#fff"/><path d="M31 9h3l5-4v15l-5-4h-3zM42 9q2 3.500 0 7M45 7q3 5.500 0 11"/><path d="M48 5q4 7 0 15" stroke="#667"/><rect x="63" y="8" width="15" height="11" rx="3"/><rect x="65.500" y="10.500" width="10" height="6" fill="#fff"/><path d="M80.500 11v5"/><path d="M61 13V7M59 6h6v3h-6zM60 3v3M64 3v3" fill="#fff"/></svg>
    <div class="flex flex-col items-end gap-[5px] ml-[14px] mr-[25px] w-[82px] text-[14.500px]"><span data-w="61">10:50 PM</span><span data-w="77">11-03-2025</span></div>
  </div>
</div>

<script>
// Give each measured label its exact advance width by spreading the letters.
function fitLabels() {
  document.querySelectorAll('[data-w]').forEach(e => {
    const w = +e.dataset.w, n = e.textContent.length;
    Object.assign(e.style, { display: 'inline-block', whiteSpace: 'pre', flex: 'none', width: 'max-content', letterSpacing: '0px' });
    const d = (w - e.getBoundingClientRect().width) / n;
    e.style.letterSpacing = d.toFixed(3) + 'px';
    e.style.width = w + 'px';
  });
}
fitLabels();
addEventListener('load', () => { fitLabels(); requestAnimationFrame(fitLabels); });
document.fonts.ready.then(fitLabels);

// ---- waveform plot ----
(() => {
  const F = 'font-family="DejaVu Serif Condensed, DejaVu Serif, serif" fill="#dcdcdc" font-size="13"';
  const t = (x, y, s, w, extra = '') => `<text x="${x}" y="${y}" ${F} textLength="${w}" lengthAdjust="spacingAndGlyphs" ${extra}>${s}</text>`;
  const X = v => 387.5 + v * 12.433;
  let o = `<defs><linearGradient id="g1" x1="0" y1="0" x2="0" y2="1"><stop offset="0" stop-color="#333"/><stop offset=".5" stop-color="#858585"/><stop offset="1" stop-color="#2c2c2c"/></linearGradient><linearGradient id="g2" x1="0" y1="0" x2="0" y2="1"><stop offset="0" stop-color="#fff"/><stop offset="1" stop-color="#8d979f"/></linearGradient><linearGradient id="g3" x1="0" y1="0" x2="0" y2="1"><stop offset="0" stop-color="#ccc"/><stop offset="1" stop-color="#a5a5a5"/></linearGradient></defs>`;
  o += `<rect x="251" y="285" width="50" height="20" fill="url(#g3)"/><path d="M267.500 287v18M299.500 287v16" stroke="#777"/><path d="M300.500 285V899" stroke="#8a8a8a"/>`;
  o += `<text x="270" y="298.500" font-family="Open Sans" font-size="12" fill="#333" textLength="16">Vis</text>`;
  for (const y of [331, 597]) o += `<use href="#eye" x="273" y="${y - 5}" width="14" height="10"/>`;
  o += t(970.5, 277.6, 'Wed Mar 12 01:15:59 2025', 163) + t(1143, 277.6, '1', 6);
  o += `<rect x="387" y="288" width="745" height="24" fill="url(#g1)"/><path d="M389 299.500l6-3v6zM1128 299.500l-6-3v6z" fill="#e00"/>
    <rect x="400.500" y="287" width="718" height="26" rx="3" stroke="#d5dae0" stroke-width="2"/><rect x="399" y="286" width="12.500" height="28" rx="3" fill="url(#g2)"/><rect x="1107.500" y="286" width="12.500" height="28" rx="3" fill="url(#g2)"/><path d="M404.500 293v14M406.500 293v14M1112.500 293v14M1114.500 293v14" stroke="#000"/>
    <path d="M412 305.500H528l2-6 5-6H760l5 7 5 5.500H993l1.500-2 1.500 2H1107" stroke="#f00"/>`;
  let g = '';
  for (let i = 0; i <= 12; i++) { const x = Math.round(X(i * 5)) - .5; g += `M${x} 321V575M${x} 587V841`; }
  for (let i = 0; i <= 20; i++) g += `M388 ${Math.round(321 + i * 12.65) + .5}H1134`;
  for (let i = 0; i <= 21; i++) g += `M388 ${Math.round(840 - i * 12.03) + .5}H1134`;
  o += `<path d="${g}" stroke="#515151" stroke-dasharray="1 3"/>`;
  let a = 'M378.500 321V576M378.500 587V842M387 847.500H1134';
  for (let i = 0; i <= 40; i++) a += `M${i % 2 ? 374 : 372} ${Math.round(321 + i * 6.325) + .5}H379`;
  for (let i = 0; i <= 105; i++) a += `M${i % 5 ? 374 : 372} ${Math.round(840 - i * 2.406) + .5}H379`;
  for (let i = 0; i <= 120; i++) a += `M${Math.round(X(i / 2)) - .5} 848V${i % 10 ? (i % 2 ? 852 : 856) : 860}`;
  o += `<path d="${a}" stroke="#f4f4f4"/>`;
  [['1000', 30], ['600.0', 33], ['200.0', 33], ['-200.0', 39], ['-600.0', 39], ['-1000', 35]].forEach(([s, w], i) => o += t(i < 3 ? 324 : 322.5, 325.6 + i * 50.6, s, w));
  [['1.05', 592, 25], ['0.8', 652, 19], ['0.6', 700, 19], ['0.4', 748, 19], ['0.2', 796, 19], ['0.0', 845, 19]].forEach(([s, y, w]) => o += t(324, y, s, w));
  for (let i = 0; i <= 12; i++) { const w = i < 2 ? 19 : 26; o += t(X(i * 5) + 1.200 - w / 2, 877, (i * 5).toFixed(1), w); }
  o += t(734, 892.500, 'time (ns)', 54) + t(0, 0, 'V (mV)', 42, 'transform="translate(316 470) rotate(-90)"') + t(0, 0, 'V (V)', 31, 'transform="translate(316 731) rotate(-90)"');
  const w = (a, b, y) => { let s = ''; for (let x = a, k = 0; x < b; x += 2, k++) s += `L${x} ${y + [0, 1, 0, -1][k % 4] * .9}`; return s; };
  o += `<path d="M388 570.500${w(389, 511, 570.500)}L512 570V566L513 529 514 481 515 451 516 417 517 387 518 365 520 342 523 325.500H637${w(638, 760, 326.300)}L760.500 326 761 355 762 394 764 425 766 465 768 508 770 540 772 560 776 571.500H886${w(887, 1008, 570.500)}L1008.500 561 1010.500 527 1012 549 1014 567 1017 571.500H1132" stroke="#f00" stroke-width="1.200"/>`;
  o += `<path d="M387.500 790V756H388.500V723.500H512V715L512.500 831 513.500 815 514 790 516 784 520 781.500H636.500V733.500H760.500V744L761.500 602 762.500 679 770 663 774 658.500H884.500V689H885.500V720.500H1008.500V732L1009.500 595 1010.500 664 1013.500 658.500H1132" stroke="#00c868" stroke-width="1.200"/>`;
  for (const y of [563.500, 829.500]) o += `<rect x="387.500" y="${y}" width="15" height="11" fill="#000" fill-opacity=".6" stroke="#8a8a8a"/><path d="M392 ${y + 2}l7 4-7 4z" fill="#999"/>`;
  document.getElementById('plot').innerHTML = o;
})();

// ---- schematic ----
(() => {
  const B = '#36b4fb', G = '#00c864', R = '#f00', O = '#ff8800', Y = '#ff0';
  let o = '';
  for (let x = 1253.500 - 92.750; x < 1918; x += 13.250) for (let y = 294; y < 917; y += 13.250) o += `<rect x="${Math.round(x - .5)}" y="${Math.round(y - .5)}" width="1" height="1" fill="#9a9aa0"/>`;
  for (let x = 1253; x < 1918; x += 106) for (let y = 320; y < 917; y += 106) o += `<path d="M${x - 1} ${y + .5}h3M${x + .5} ${y - 1}v3" stroke="#fff"/>`;
  const p = (c, d) => o += `<path d="${d}" stroke="${c}"/>`;
  const pin = (...l) => l.forEach(([x, y]) => o += `<rect x="${Math.round(x) - 3}" y="${Math.round(y) - 3}" width="7" height="6" fill="${R}"/>`);
  const gpin = (x, y) => o += `<rect x="${Math.floor(x) - 2.5}" y="${Math.floor(y) - 2.5}" width="6" height="5" fill="${R}" stroke="${G}"/>`;
  const sq = (x, y) => o += `<rect x="${x - 2.500}" y="${y - 2.500}" width="5" height="5" fill="${B}"/>`;
  const dot = (x, y) => o += `<circle cx="${x}" cy="${y}" r="3" fill="${B}"/>`;
  const FT = c => `fill="${c}" stroke="${c}" stroke-width=".3" font-family="Liberation Sans, sans-serif"`;
  const t = (c, x, y, s, w, fs = 9) => o += `<text x="${x}" y="${y}" ${FT(c)} font-size="${fs}" textLength="${w}" lengthAdjust="spacingAndGlyphs">${s}</text>`;
  const tv = (c, x, y, s, w) => o += `<text transform="translate(${x} ${y}) rotate(-90)" ${FT(c)} font-size="9" textLength="${w}" lengthAdjust="spacingAndGlyphs">${s}</text>`;
  const tri = (x, y) => p(G, `M${x - 7} ${y}h14l-7 7z`);
  const src = (x, y, end) => { p(G, `M${x} ${y - 20}V${y - 7}M${x} ${y + 7}V${y + 20}M${x - 3} ${y - 3}h6M${x} ${y - 6}v6M${x - 3} ${y + 3}h6`); o += `<circle cx="${x}" cy="${y}" r="7" stroke="${G}" shape-rendering="auto"/>`; if (end) { p(B, `M${x} ${y + 20}V${end}`); p(G, `M${x} ${end}v20`); tri(x, end + 20); pin([x - .5, y + 20], [x - .5, end]); t(R, x + 6.500, end + 15, 'gnd', 13); } pin([x - .5, y - 20]); };
  const saw = (x, y) => p(G, `M${x} ${y + 3}l4-5 3 4 4-4 3 4`);

  // wires
  p(B, 'M1247.500 292V313.500M1220.500 340V313.500H1280.500V340M1162 359.500H1193M1161.500 360V405M1220 359.500H1234.500V393.500H1220M1220.500 380V413.500H1280.500V380M1281 359.500H1267.500V393.500H1280M1247.500 413.500V512.500H1304M1308 359.500H1552M1161.500 446V473');
  p(B, 'M1459.500 526V570M1459.500 552.500H1426.500V592.500H1458M1487 592.500H1645M1487 658.500H1605M1459 658.500H1426.500V691.500H1466.500V711M1459.500 680V691M1221 718.500H1253.500V751.500H1273M1273.500 772V824.500H1255M1201 824.500H1213M1200.500 824.500V804.500H1234.500V823M1201 824.500H1194.500V864.500H1162M1234.500 852V884.500H1327M1161.500 864V884');
  p(B, 'M1379.500 772V817.500H1472.500V831M1492.500 831V804.500H1525.500V818M1512.500 831V817.500H1545.500V805M1492.500 858V884.500H1579M1764.500 606V625');
  // input pair
  p(G, 'M1220.500 343V349.500H1207.500M1194 359.500H1204M1204.500 349V370M1207.500 349V370M1208 359.500H1220M1208 369.500H1220.500V380M1214 366l6 3.500-6 4M1280.500 343V349.500H1293.500V369.500H1280.500V380M1297.500 349V370M1298 359.500H1307M1293 359.500H1281M1287 366l-6 3.500 6 4');
  pin([1220, 340], [1280, 340], [1193, 360], [1220, 360], [1280, 360], [1306, 360], [1220, 380], [1280, 380]);
  dot(1247, 313.500); dot(1221, 393); sq(1280.500, 393); dot(1247, 413); dot(1162, 360);
  o += `<rect x="1304.500" y="509.500" width="5" height="6" stroke="${Y}"/>`;
  t(Y, 1184, 337, 'nmos1v', 29); t(Y, 1288, 337, 'nmos1v', 29); t(R, 1227, 337, 'NM12', 21); t(R, 1251, 337, 'NM20', 22);
  t(O, 1225, 347, '"g45n1svt"', 43); t(O, 1233, 347, '"g45n1svt"', 43); t(O, 1224, 357, 'w:120n', 27); t(O, 1249, 357, 'w:120n', 27);
  t(O, 1225, 377, 'l:45n', 18); t(O, 1258, 377, 'l:45n', 18); t(O, 1225, 387, 'm:1', 13); t(O, 1262, 387, 'm:1', 13);
  t(B, 1440, 356, 'INPUT_A_BAR', 65, 10);
  // V11, V5
  src(1552.500, 380, 426.500); p(G, 'M1531 381.500h3v-4h4v4h3v-4h3v4'); t(R, 1559, 367, 'V11', 13); t(O, 1562, 377, 'v1=1', 19); t(O, 1562, 387, 'v2:0', 17); t(O, 1562, 397, 'tr=100p', 32);
  src(1161.500, 426, 473); t(R, 1167, 413, 'V5', 10); t(O, 1171, 423, 'v1:0', 16); t(O, 1171, 433, 'v2=1', 19); t(O, 1171, 443, 'tr=100p', 32);
  // PM1 / NM1
  p(G, 'M1443 499.500H1477M1459.500 500V526M1459.500 574V582.500H1472.500V602.500H1459.500V648.500H1472.500V668.500H1459.500V678M1476.500 582V603M1477 592.500H1486M1472 592.500H1460M1462 578l6 4.500-7 3M1476.500 648V669M1477 658.500H1486M1472 658.500H1460M1466 665l-6 3.500 6 4M1459.500 625.500H1326.500V711');
  sq(1459.500, 552.500); sq(1459.500, 625.500); sq(1459.500, 691.500);
  pin([1459, 526], [1459, 572], [1459, 592], [1485, 592], [1459, 658.500], [1485, 658.500], [1459, 678.500]); gpin(1459, 612); gpin(1459, 638); gpin(1327, 698);
  t(R, 1466, 513, 'vdda', 16); t(R, 1437, 569, 'PM1', 15); t(Y, 1467, 569, 'pmos1v', 29); t(O, 1412, 579, '"g45p1svt"', 43); t(O, 1429, 589, 'w:120n', 26); t(O, 1437, 609, 'l:45n', 18); t(O, 1442, 619, 'm:1', 13);
  t(R, 1437, 636, 'NM1', 15); t(Y, 1467, 636, 'nmos1v', 29); t(O, 1412, 646, '"g45n1svt"', 43); t(O, 1429, 656, 'w:120n', 26); t(O, 1437, 676, 'l:45n', 18); t(O, 1442, 686, 'm:1', 13);
  t('#ffe8c8', 1451, 665, '0', 4, 8); t('#ffe8c8', 1463, 678, '0', 5, 8);
  p(G, 'M1466.500 712V731'); tri(1466.500, 731.500); pin([1466, 711.500]); t(R, 1473, 726, 'gnd', 13);
  t(B, 1536, 588, 'STTN_bar', 46, 10); t(B, 1516, 654, 'STTP_bar', 46, 10);
  src(1645.500, 612, 665); saw(1624, 612); t(R, 1652, 599, 'V15', 14); t(O, 1655, 609, 't1=0', 19); t(O, 1655, 619, 'v1=1.2', 27); t(O, 1655, 629, 'tvpairs=7', 38);
  src(1605.500, 678.500, 731.500); saw(1585, 678); t(R, 1612, 665, 'V14', 14); t(O, 1616, 676, 't1=0', 18); t(O, 1616, 686, 'v1=1.2', 26); t(O, 1616, 695, 'tvpairs=8', 38);
  src(1764.500, 645, 692); p(G, 'M1748 578.500H1782M1764.500 579V605'); pin([1764, 605.500]); t(R, 1771, 593, 'vdda', 16); t(R, 1769, 631, 'V0', 8); t(O, 1775, 642, 'vdc=1.2', 31);
  // magnetic cell
  p(G, 'M1307.500 764V711.500H1346.500V764M1307 731.500H1347M1307 744.500H1347M1287.500 764.500H1366.500V777.500H1287.500zM1274 751.500H1307M1347 751.500H1380M1274 771.500H1287M1367 771.500H1380M1221.500 712V725H1214');
  o += `<path d="M1308 739l7-7M1308 744l12-12M1314 744l12-12M1320 744l12-12M1326 744l12-12M1332 744l12-12M1338 744l8-8" stroke="${G}"/>`;
  o += `<path d="M1207 718.500l7-6.500h7v13h-7zM1419 745h8l7 6.500-7 6.500h-8z" fill="${R}"/>`; p(R, 'M1382 751.500H1419');
  pin([1273, 751.500], [1379, 751.500], [1273, 771], [1379, 771]);
  t(G, 1253.500, 705, 'PMA_SOT_STT', 68, 10); t('#d0c000', 1280, 722, '[1', 8, 10); t(R, 1331, 702, 'T1', 10, 10); t(R, 1181, 722, 't2_2', 22, 10); t(R, 1258, 755, 'Tc', 11, 10); t(R, 1384, 755, 'Tmz', 18, 10); t(R, 1437, 755, 'state1', 28, 10); t(R, 1258, 775, 'T2', 11, 10); t(R, 1384, 775, 'T3', 11, 10);
  // NM2
  p(G, 'M1254 824.500H1243.500V837.500H1224.500V824.500H1214M1224 840.500H1244M1234.500 824V837M1234.500 841V851M1222 833l3-6 4 5M1161.500 884V903M1161 903.500h6l-6 8');
  pin([1254, 824.500], [1234, 824.500], [1213, 824.500], [1234, 851], [1161, 884]); sq(1201, 824.500); dot(1162, 864);
  tv(O, 1213, 821, 'm:1', 13); tv(O, 1223, 821, 'l:45n', 19); tv(O, 1243, 821, 'w:120n', 27); tv(O, 1251, 821, '"g45n1svt"', 44); tv(R, 1264, 817, 'NM2', 16); tv(Y, 1264, 861, 'nmos1v', 29);
  tv('#ffe8c8', 1234, 821, '0', 5); tv('#ffe8c8', 1220, 833, '0', 5); t(R, 1168, 899, 'gnd', 13); t(B, 1269.500, 880, 'SHEP_bar', 48, 10);
  // PM3
  p(G, 'M1473 831.500H1482.500V844.500H1502.500V831.500H1513M1482 847.500H1503M1492.500 831V844M1492.500 848V857M1499 832l3 7 4-6M1529 777.500H1563M1545.500 778V805');
  pin([1472, 831], [1492, 831], [1512, 831], [1492, 857.500], [1545, 804.500]); dot(1526, 818);
  tv(O, 1472, 827, 'm:1', 13); tv(O, 1482, 827, 'l:45n', 18); tv(O, 1502, 827, 'w:120n', 26); tv(O, 1510, 827, '"g45p1svt"', 44); tv(R, 1522, 824, 'PM3', 16); tv(Y, 1521, 868, 'pmos1v', 29); t(R, 1552, 792, 'vdda', 16); t(B, 1521, 880, 'SHEN_bar', 49, 10);
  for (const [x, n] of [[1326.500, 'V12'], [1578.500, 'V13']]) { src(x, 904); saw(x - 20, 904); t(R, x + 6.500, 891, n, 14); t(O, x + 10, 901, 't1=0', 19); t(O, x + 10, 911, 'v1:0', 16); t(O, x + 11, 922, 'tvpairs=11', 40); }
  document.getElementById('sch').innerHTML = '<rect x="1161" y="292" width="757" height="625" fill="#000"/>' + o;
})();
</script>
</body>
</html>
